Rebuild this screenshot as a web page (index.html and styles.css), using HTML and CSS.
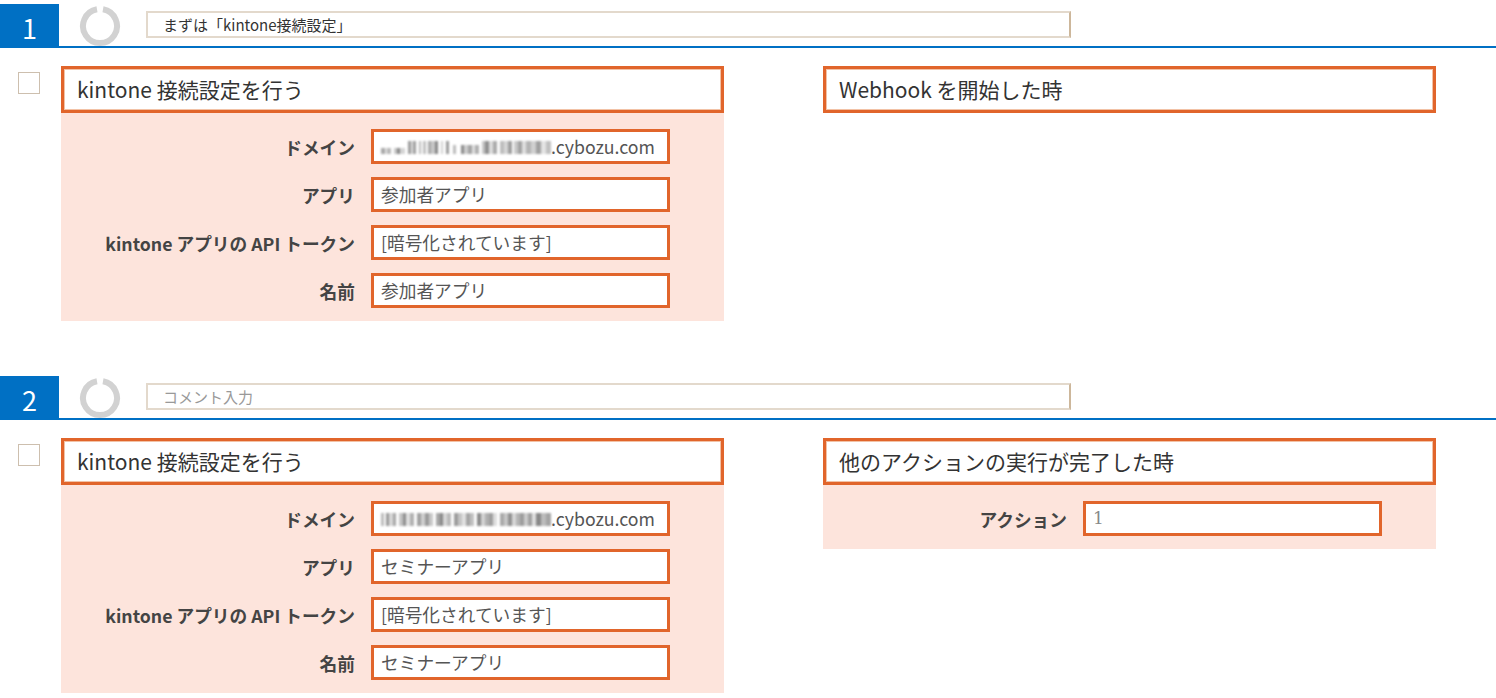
FILE: index.html
```html
<!DOCTYPE html>
<html lang="ja">
<head>
<meta charset="utf-8">
<title>steps</title>
<link rel="stylesheet" href="styles.css">
</head>
<body>
<section class="step">
  <div class="step-head">
    <div class="step-num">1</div>
    <div class="spinner">
      <svg width="42" height="42" viewBox="0 0 42 42"><path d="M24 4.3 A17 17 0 1 1 18 4.3" fill="none" stroke="#d2d2d2" stroke-width="6"/></svg>
    </div>
    <div class="comment">まずは「kintone接続設定」</div>
  </div>
  <div class="step-body">
    <div class="check-col"><span class="check"></span></div>
    <div class="card card-left">
      <div class="card-title">kintone 接続設定を行う</div>
      <div class="card-panel">
        <div class="row"><span class="label">ドメイン</span><span class="field"><span class="mosaic m1" aria-hidden="true"></span>.cybozu.com</span></div>
        <div class="row"><span class="label">アプリ</span><span class="field">参加者アプリ</span></div>
        <div class="row"><span class="label">kintone アプリの API トークン</span><span class="field">[暗号化されています]</span></div>
        <div class="row"><span class="label">名前</span><span class="field">参加者アプリ</span></div>
      </div>
    </div>
    <div class="card card-right">
      <div class="card-title">Webhook を開始した時</div>
    </div>
  </div>
</section>

<section class="step">
  <div class="step-head">
    <div class="step-num">2</div>
    <div class="spinner">
      <svg width="42" height="42" viewBox="0 0 42 42"><path d="M24 4.3 A17 17 0 1 1 18 4.3" fill="none" stroke="#d2d2d2" stroke-width="6"/></svg>
    </div>
    <div class="comment placeholder">コメント入力</div>
  </div>
  <div class="step-body">
    <div class="check-col"><span class="check"></span></div>
    <div class="card card-left">
      <div class="card-title">kintone 接続設定を行う</div>
      <div class="card-panel">
        <div class="row"><span class="label">ドメイン</span><span class="field"><span class="mosaic m2" aria-hidden="true"></span>.cybozu.com</span></div>
        <div class="row"><span class="label">アプリ</span><span class="field">セミナーアプリ</span></div>
        <div class="row"><span class="label">kintone アプリの API トークン</span><span class="field">[暗号化されています]</span></div>
        <div class="row"><span class="label">名前</span><span class="field">セミナーアプリ</span></div>
      </div>
    </div>
    <div class="card card-right">
      <div class="card-title">他のアクションの実行が完了した時</div>
      <div class="card-panel">
        <div class="row"><span class="label">アクション</span><span class="field num">1</span></div>
      </div>
    </div>
  </div>
</section>
</body>
</html>
```
FILE: styles.css
```css
* { box-sizing: border-box; }
html, body { margin: 0; padding: 0; background: #fff; }
body {
  padding-top: 4px;
  font-family: "Noto Sans CJK JP", "Noto Sans", sans-serif;
  color: #333;
  overflow: hidden;
}
.step { margin-bottom: 55px; }
.step-head {
  display: flex;
  align-items: center;
  height: 44px;
  border-bottom: 2px solid #0070c4;
}
.step-num {
  width: 59px;
  height: 44px;
  margin-bottom: -2px;
  align-self: flex-start;
  background: #0070c4;
  color: #fff;
  font-size: 27px;
  display: flex;
  align-items: center;
  justify-content: center;
  line-height: 1;
  padding-top: 2px;
}
.spinner {
  margin-left: 20px;
  width: 42px;
  height: 42px;
  display: flex;
  margin-top: 2px;
}
.comment {
  margin-left: 25px;
  width: 925px;
  height: 27px;
  border: 2px solid #e3d9cc;
  border-right-color: #cdb79b;
  font-size: 15px;
  line-height: 23px;
  padding-left: 15px;
  color: #333;
  margin-top: -1px;
}
.comment.placeholder { color: #999; }
.step-body {
  display: flex;
  align-items: flex-start;
  margin-top: 18px;
}
.check-col { width: 61px; flex: none; }
.check {
  display: block;
  width: 22px;
  height: 22px;
  margin: 6px 0 0 18px;
  border: 1px solid #cdbfae;
  background: #fff;
}
.card { flex: none; }
.card-left { width: 663px; }
.card-right { width: 613px; margin-left: 99px; }
.card-title {
  height: 47px;
  border: 3px solid #e1652b;
  box-shadow: inset 0 0 0 1px #f2c2a6;
  background: #fff;
  font-size: 21px;
  line-height: 41px;
  padding-left: 13px;
  color: #333;
}
.card-panel {
  background: #fde4dc;
  padding: 16px 54px 13px 0;
  display: flex;
  flex-direction: column;
  gap: 13px;
}
.row {
  display: flex;
  justify-content: flex-end;
  align-items: center;
  gap: 16px;
}
.label {
  font-size: 17.7px;
  font-weight: bold;
  color: #444;
}
.field {
  width: 299px;
  height: 35px;
  border: 3px solid #e1652b;
  background: #fff;
  font-size: 17.7px;
  line-height: 29px;
  padding-left: 7px;
  color: #555;
  white-space: nowrap;
  overflow: hidden;
}
.field.num {
  font-family: "DejaVu Serif", serif;
  color: #888;
  font-size: 17px;
}
.mosaic {
  display: inline-block;
  width: 170px;
  height: 13px;
  margin-top: 9px;
  vertical-align: top;
  filter: blur(0.8px);
}
.mosaic.m1 {
  background:
    linear-gradient(to bottom, #fff 55%, transparent 55%) 0 0 / 24px 100% no-repeat,
    linear-gradient(to bottom, #fff 30%, transparent 30%) 70px 0 / 30px 100% no-repeat,
    linear-gradient(to right, #a8a8a8 0 4px, #e2e2e2 4px 6px, #b8b8b8 6px 10px, #fff 10px 13px, #c8c8c8 13px 16px, #888 16px 19px, #d4d4d4 19px 24px, #fff 24px 27px, #9c9c9c 27px 30px, #e0e0e0 30px 32px, #a0a0a0 32px 35px, #fff 35px 38px, #bbb 38px 40px, #fff 40px 42px, #c0c0c0 42px 45px, #fff 45px 47px, #aaa 47px 50px, #c8c8c8 50px 54px, #888 54px 57px, #fff 57px 60px, #d0d0d0 60px 62px, #fff 62px 65px, #9a9a9a 65px 68px, #fff 68px 72px, #bcbcbc 72px 75px, #fff 75px 80px, #8c8c8c 80px 83px, #ccc 83px 87px, #a4a4a4 87px 91px, #e0e0e0 91px 94px, #b0b0b0 94px 98px, #fff 98px 101px, #c4c4c4 101px 104px, #909090 104px 108px, #ddd 108px 112px, #aaa 112px 116px, #fff 116px 119px, #bdbdbd 119px 123px, #d6d6d6 123px 127px, #9e9e9e 127px 131px, #fff 131px 133px, #c8c8c8 133px 137px, #a2a2a2 137px 141px, #e0e0e0 141px 145px, #b4b4b4 145px 150px, #d0d0d0 150px 155px, #a0a0a0 155px 160px, #e4e4e4 160px 165px, #c0c0c0 165px 170px) 0 0 / 170px 100% no-repeat;
}
.mosaic.m2 {
  background:
    linear-gradient(to right, #bbb 0 3px, #fff 3px 5px, #999 5px 8px, #d8d8d8 8px 12px, #a6a6a6 12px 15px, #fff 15px 18px, #c4c4c4 18px 22px, #8e8e8e 22px 25px, #e0e0e0 25px 29px, #b0b0b0 29px 33px, #fff 33px 36px, #a0a0a0 36px 40px, #d0d0d0 40px 44px, #9a9a9a 44px 48px, #c8c8c8 48px 52px, #fff 52px 55px, #a8a8a8 55px 59px, #888 59px 62px, #d8d8d8 62px 66px, #b8b8b8 66px 70px, #fff 70px 73px, #9c9c9c 73px 77px, #c4c4c4 77px 81px, #e2e2e2 81px 85px, #a4a4a4 85px 89px, #c0c0c0 89px 93px, #fff 93px 96px, #8a8a8a 96px 100px, #d4d4d4 100px 104px, #b0b0b0 104px 108px, #9e9e9e 108px 112px, #ddd 112px 116px, #fff 116px 119px, #a8a8a8 119px 123px, #c8c8c8 123px 127px, #909090 127px 131px, #d8d8d8 131px 135px, #b4b4b4 135px 139px, #9c9c9c 139px 143px, #ccc 143px 147px, #a0a0a0 147px 151px, #e0e0e0 151px 155px, #888 155px 160px, #bcbcbc 160px 165px, #a4a4a4 165px 170px) 0 0 / 170px 100% no-repeat;
}
```
